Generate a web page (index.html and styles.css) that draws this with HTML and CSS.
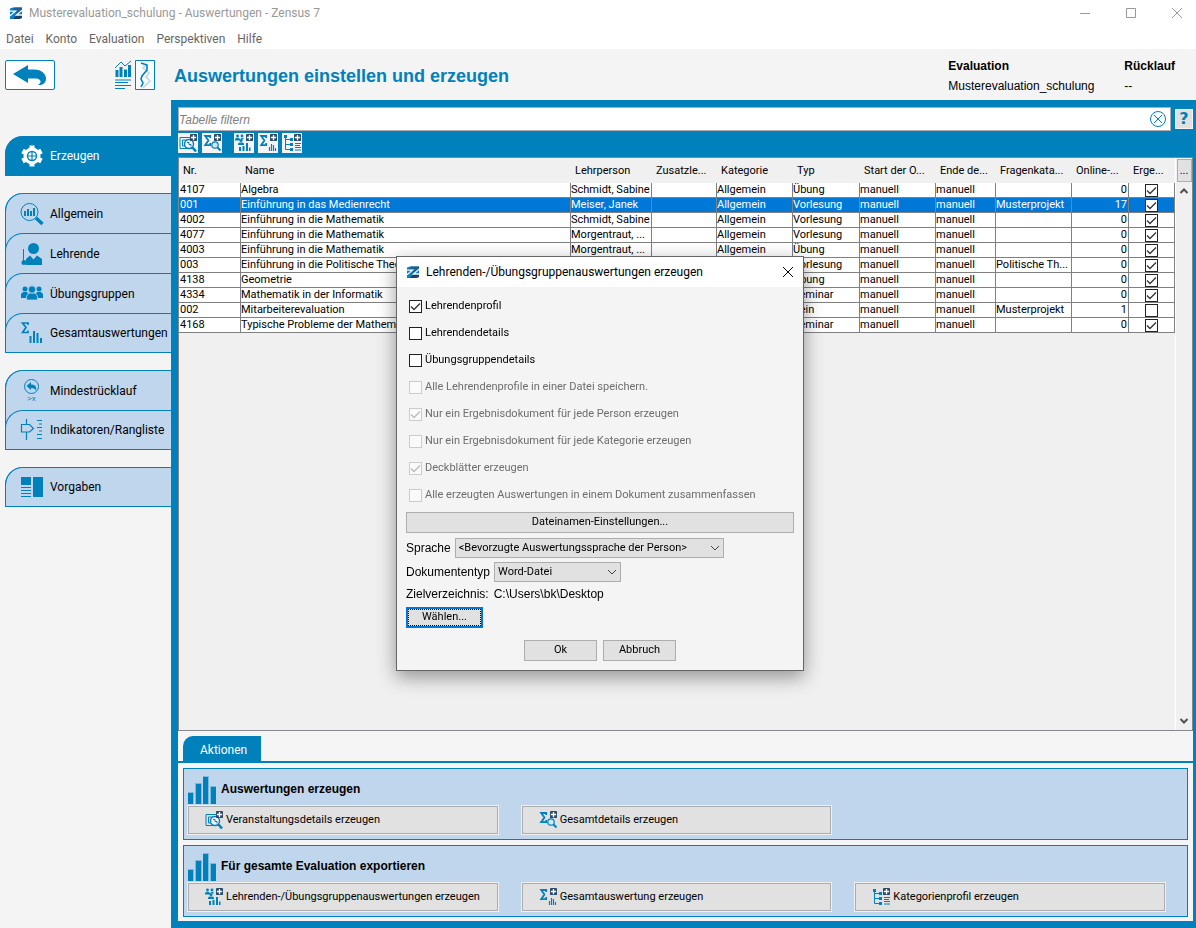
FILE: index.html
```html
<!DOCTYPE html>
<html lang="de">
<head>
<meta charset="utf-8">
<title>Musterevaluation_schulung - Auswertungen - Zensus 7</title>
<link rel="stylesheet" href="styles.css">
</head>
<body>
<svg class="defs" aria-hidden="true">
  <symbol id="logo" viewBox="0 0 14 14">
    <path d="M1 2.500 4 1.500h9V12l-3 1H1z" fill="#0b7fc0"/>
    <path d="M5 1.500h8V4L9 7H6l2-3H4z" fill="#1e5f94"/>
    <path d="M7 9.500 13 8v4l-3 1H4z" fill="#1e3f66"/>
    <path d="M1 5.200h5.500L1 9.800M13 9h-5.500L13 4.200" fill="none" stroke="#f4fafd" stroke-width="1.300"/>
  </symbol>
  <symbol id="plus" viewBox="0 0 8 8">
    <rect width="8" height="8" rx="1" fill="#2c4a6b"/>
    <path d="M4 1v6M1 4h6" stroke="#fff" stroke-width="1.500"/>
  </symbol>
  <symbol id="details" viewBox="0 0 20 20">
    <path d="M2 4.500h12v11H2zM4.500 7h8M4.500 7v6H8" fill="none" stroke="#0081bc"/>
    <circle cx="11" cy="11" r="4.500" fill="#f4f4f4" stroke="#0081bc" stroke-width="1.400"/>
    <path d="M9 9.500h2v2h2v2" fill="none" stroke="#0081bc"/>
    <path d="m14.500 14.500 3.500 4" stroke="#0081bc" stroke-width="2.600"/>
    <use href="#plus" x="12" y="1" width="7" height="7"/>
  </symbol>
  <symbol id="sum" viewBox="0 0 20 20">
    <path d="M8.200 5V3H3.200l3.200 4.500-3.200 4.700h5V10" fill="none" stroke="#0081bc" stroke-width="1.800"/>
  </symbol>
  <symbol id="sumdetails" viewBox="0 0 20 20">
    <use href="#sum"/>
    <circle cx="13" cy="12" r="3.200" fill="#d5e6f3" stroke="#0081bc" stroke-width="1.200"/>
    <path d="m15.500 14.500 3 3" stroke="#0081bc" stroke-width="2"/>
    <use href="#plus" x="12" y="1" width="7" height="7"/>
  </symbol>
  <symbol id="peoplebars" viewBox="0 0 20 20">
    <g fill="#0081bc">
      <circle cx="3.500" cy="3" r="1.400"/><path d="M1 7.500V6l1.500-1.200h2L6 6v1.500z"/>
      <circle cx="8" cy="3" r="1.400"/><path d="M6.500 6 7.500 5h2v1.500h-2z"/>
      <circle cx="7" cy="7.600" r="1.500"/><path d="M4 12v-1.500L5.500 9.500h3l1.500 1V12z"/>
      <path d="M5 14h2v4H5zM8.500 13h2v5h-2zM12 10h2v8h-2zM15 14.500h1.500V18H15z"/>
    </g>
    <use href="#plus" x="12" y="1" width="7" height="7"/>
  </symbol>
  <symbol id="sumbars" viewBox="0 0 20 20">
    <use href="#sum"/>
    <path d="M11.500 14v4M13.500 11v7M15.500 12v6M17.500 15v3" stroke="#0081bc" stroke-width="1.200"/>
    <use href="#plus" x="12" y="1" width="7" height="7"/>
  </symbol>
  <symbol id="tree" viewBox="0 0 20 20">
    <path d="M3.500 3v13.500H9M3.500 6.500H9M3.500 11.500H9" fill="none" stroke="#0081bc"/>
    <path d="M2 2h3v3H2zM8 5h3v3H8zM8 10h3v3H8zM8 15h3v3H8z" fill="#0081bc"/>
    <path d="M13 10.500h6M13 12.500h5M13 14.500h6M13 17h6" stroke="#0081bc"/>
    <use href="#plus" x="12" y="1" width="7" height="7"/>
  </symbol>
  <symbol id="bars" viewBox="0 0 28 28">
    <path d="M0 16h6v12H0zM7 7h7v21H7zM15 0h6v28h-6zM22 10h6v18h-6z" fill="#7fb9dc"/>
    <path d="M0 17h5v11H0zM8 8h5v20H8zM15 1h5v27h-5zM23 11h5v17h-5z" fill="#0081bc"/>
  </symbol>
</svg>

<header class="titlebar">
  <svg class="logo"><use href="#logo"/></svg>
  <span class="window-title">Musterevaluation_schulung - Auswertungen - Zensus 7</span>
  <div class="window-controls">
    <button type="button" aria-label="Minimieren"><svg viewBox="0 0 12 12"><path d="M1 6.500h10"/></svg></button>
    <button type="button" aria-label="Maximieren"><svg viewBox="0 0 12 12"><path d="M1.500 1.500h9v9h-9z"/></svg></button>
    <button type="button" aria-label="Schließen"><svg viewBox="0 0 12 12"><path d="m1 1 10 10M11 1 1 11"/></svg></button>
  </div>
</header>
<nav class="menubar">
  <a href="#">Datei</a><a href="#">Konto</a><a href="#">Evaluation</a><a href="#">Perspektiven</a><a href="#">Hilfe</a>
</nav>

<section class="page-head">
  <button type="button" class="back" aria-label="Zurück">
    <svg viewBox="0 0 36 24"><path d="M1 11 16 2v4.500h6c8 0 12 5 12 9 0 3-1.500 5.500-5 6.500h-3c2-1 3-3 2.500-4-.8-2.200-3-2.500-6.500-2.500h-6V20z" fill="#0081bc"/></svg>
  </button>
  <svg class="head-icon" viewBox="0 0 42 30">
    <g fill="none" stroke="#0081bc">
      <path d="m1 8 6-6 4 4 6-5" />
      <path d="M3 10v7M7 7v10M11.500 9.500V17M15.500 5v12" stroke-width="3"/>
      <path d="M1 20h16M1 22.500h13M1 25.500h16M1 28.500h10" stroke-width="1.200"/>
      <path d="M21.500.5h19v29h-19z" fill="#f8fbfd"/>
      <path d="m33 4-4 4 6 5-3 4 4 4-7 7" stroke="#c0d6ed" stroke-width="1.600"/>
      <path d="m27 3 6 2v5l-5 6-1 3 2 4-2 4" stroke-width="1.600"/>
    </g>
  </svg>
  <h1>Auswertungen einstellen und erzeugen</h1>
  <dl class="facts">
    <div><dt>Evaluation</dt><dd>Musterevaluation_schulung</dd></div>
    <div><dt>Rücklauf</dt><dd>--</dd></div>
  </dl>
</section>

<div class="workspace">
  <nav class="sidebar">
    <div class="tabs">
      <a class="tab active" href="#">
        <svg viewBox="0 0 24 24"><circle cx="12" cy="12" r="8.500" fill="#fff"/><path d="M12 1.500v21M2.500 7l19 10M2.500 17l19-10" stroke="#fff" stroke-width="5"/><circle cx="12" cy="12" r="4.500" fill="#fff" stroke="#0081bc" stroke-width="1.400"/><path d="M12 8v8M8 12h8" stroke="#0081bc" stroke-width="1.200"/></svg>
        Erzeugen</a>
    </div>
    <div class="tabs">
      <a class="tab" href="#">
        <svg viewBox="0 0 24 24"><g fill="none" stroke="#0081bc"><circle cx="9.500" cy="10" r="8.500"/><path d="M5 9v5M8 7v7M11 9v5M14 6v8" stroke-width="2"/><path d="m16 16 6.500 6" stroke-width="3.500"/></g></svg>
        Allgemein</a>
      <a class="tab" href="#">
        <svg viewBox="0 0 24 24"><g fill="#0081bc"><circle cx="13.500" cy="6.500" r="5.500"/><path d="M6 23v-6l4-3.500 3.500 4 3.500-4 5 3.500v6z"/><circle cx="4" cy="20.500" r="2.500"/><path d="M3 7h1v12H3z"/></g></svg>
        Lehrende</a>
      <a class="tab" href="#">
        <svg viewBox="0 0 24 24"><g fill="#0081bc"><circle cx="5" cy="7" r="2.500"/><circle cx="19" cy="7" r="2.500"/><path d="M1 16v-4l2-2h4l1 1.500L7 14v2zM23 16v-4l-2-2h-4l-1 1.500 1 2.500v2z"/></g><g fill="#0081bc" stroke="#c0d6ed" stroke-width=".8"><path d="M6.500 18v-4l2.500-3h6l2.500 3v4z"/><circle cx="12" cy="7.500" r="3.700"/></g></svg>
        Übungsgruppen</a>
      <a class="tab" href="#">
        <svg viewBox="0 0 24 24"><path d="M8 4V2H2.500L6 6.500 2.500 11.500H8V9.500" fill="none" stroke="#0081bc" stroke-width="1.700"/><path d="M10.500 15v7M14 10v12M17.500 12v10M21 17v5" stroke="#0081bc" stroke-width="2"/></svg>
        Gesamtauswertungen</a>
    </div>
    <div class="tabs">
      <a class="tab" href="#">
        <svg viewBox="0 0 24 24"><circle cx="11.500" cy="7.500" r="7" fill="none" stroke="#0081bc"/><path d="m6.500 7 4.500-4v2.500c4 0 6 2 5 6.500-.5-2-2-3-5-3V11z" fill="#0081bc"/><text x="7" y="22" class="tiny">&gt;x</text></svg>
        Mindestrücklauf</a>
      <a class="tab" href="#">
        <svg viewBox="0 0 24 24"><path d="M6.500 1v6M6.500 14v8M1.500 6.500h8l4 4-4 3.500h-8zM17 2.500h5M19 6h3M17 9.500h5M19 13h3M17 16.500h5M17 20.500h5" fill="none" stroke="#0081bc" stroke-width="1.200"/></svg>
        Indikatoren/Rangliste</a>
    </div>
    <div class="tabs">
      <a class="tab" href="#">
        <svg viewBox="0 0 24 24"><path d="M1 2h10v8H1zM13 2h10v20H13z" fill="#0081bc"/><path d="M1 12.500h10M1 15.500h10M1 18.500h10M1 21.500h10" stroke="#0081bc"/></svg>
        Vorgaben</a>
    </div>
  </nav>

  <main class="content">
    <div class="filter-row">
      <div class="filter">
        <input type="text" aria-label="Tabelle filtern" placeholder="Tabelle filtern">
        <button type="button" aria-label="Filter löschen"><svg viewBox="0 0 18 18"><circle cx="9" cy="9" r="7.500"/><path d="m5 5 8 8M13 5l-8 8"/></svg></button>
      </div>
      <button type="button" class="help">?</button>
    </div>
    <div class="toolbar">
      <button type="button" aria-label="Veranstaltungsdetails"><svg><use href="#details"/></svg></button>
      <button type="button" aria-label="Gesamtdetails"><svg><use href="#sumdetails"/></svg></button>
      <span class="spacer"></span>
      <button type="button" aria-label="Lehrendenauswertungen"><svg><use href="#peoplebars"/></svg></button>
      <button type="button" aria-label="Gesamtauswertung"><svg><use href="#sumbars"/></svg></button>
      <button type="button" aria-label="Kategorienprofil"><svg><use href="#tree"/></svg></button>
    </div>

    <div class="grid-pane">
      <div class="grid-body">
        <table>
          <colgroup><col class="w62"><col><col class="w81"><col class="w65"><col class="w76"><col class="w67"><col class="w76"><col class="w60"><col class="w76"><col class="w57"><col class="w46"></colgroup>
          <thead><tr><th>Nr.</th><th>Name</th><th>Lehrperson</th><th>Zusatzle...</th><th>Kategorie</th><th>Typ</th><th>Start der O...</th><th>Ende de...</th><th>Fragenkata...</th><th>Online-...</th><th>Erge...</th></tr></thead>
          <tbody>
            <tr><td>4107</td><td>Algebra</td><td>Schmidt, Sabine</td><td></td><td>Allgemein</td><td>Übung</td><td>manuell</td><td>manuell</td><td></td><td>0</td><td><input type="checkbox" aria-label="Ergebnis 4107" checked></td></tr>
            <tr class="selected"><td>001</td><td>Einführung in das Medienrecht</td><td>Meiser, Janek</td><td></td><td>Allgemein</td><td>Vorlesung</td><td>manuell</td><td>manuell</td><td>Musterprojekt</td><td>17</td><td><input type="checkbox" aria-label="Ergebnis 001" checked></td></tr>
            <tr><td>4002</td><td>Einführung in die Mathematik</td><td>Schmidt, Sabine</td><td></td><td>Allgemein</td><td>Vorlesung</td><td>manuell</td><td>manuell</td><td></td><td>0</td><td><input type="checkbox" aria-label="Ergebnis 4002" checked></td></tr>
            <tr><td>4077</td><td>Einführung in die Mathematik</td><td>Morgentraut, ...</td><td></td><td>Allgemein</td><td>Vorlesung</td><td>manuell</td><td>manuell</td><td></td><td>0</td><td><input type="checkbox" aria-label="Ergebnis 4077" checked></td></tr>
            <tr><td>4003</td><td>Einführung in die Mathematik</td><td>Morgentraut, ...</td><td></td><td>Allgemein</td><td>Übung</td><td>manuell</td><td>manuell</td><td></td><td>0</td><td><input type="checkbox" aria-label="Ergebnis 4003" checked></td></tr>
            <tr><td>003</td><td>Einführung in die Politische Theorie</td><td></td><td></td><td></td><td>Vorlesung</td><td>manuell</td><td>manuell</td><td>Politische Th...</td><td>0</td><td><input type="checkbox" aria-label="Ergebnis 003" checked></td></tr>
            <tr><td>4138</td><td>Geometrie</td><td></td><td></td><td></td><td>Übung</td><td>manuell</td><td>manuell</td><td></td><td>0</td><td><input type="checkbox" aria-label="Ergebnis 4138" checked></td></tr>
            <tr><td>4334</td><td>Mathematik in der Informatik</td><td></td><td></td><td></td><td>Seminar</td><td>manuell</td><td>manuell</td><td></td><td>0</td><td><input type="checkbox" aria-label="Ergebnis 4334" checked></td></tr>
            <tr><td>002</td><td>Mitarbeiterevaluation</td><td></td><td></td><td></td><td>Kein</td><td>manuell</td><td>manuell</td><td>Musterprojekt</td><td>1</td><td><input type="checkbox" aria-label="Ergebnis 002"></td></tr>
            <tr><td>4168</td><td>Typische Probleme der Mathematik</td><td></td><td></td><td></td><td>Seminar</td><td>manuell</td><td>manuell</td><td></td><td>0</td><td><input type="checkbox" aria-label="Ergebnis 4168" checked></td></tr>
          </tbody>
        </table>
      </div>
      <div class="scroll">
        <button type="button" class="columns">...</button>
        <button type="button" class="arrow" aria-label="Nach oben"><svg viewBox="0 0 10 10"><path d="m1.500 7 3.500-3.500L8.500 7"/></svg></button>
        <span class="track"></span>
        <button type="button" class="arrow" aria-label="Nach unten"><svg viewBox="0 0 10 10"><path d="M1.500 3 5 6.500 8.500 3"/></svg></button>
      </div>
    </div>

    <section class="actions">
      <div class="action-tabs"><a href="#">Aktionen</a></div>
      <div class="action-list">
        <div class="group">
          <h2><svg><use href="#bars"/></svg>Auswertungen erzeugen</h2>
          <div class="group-buttons">
            <button type="button"><svg><use href="#details"/></svg>Veranstaltungsdetails erzeugen</button>
            <button type="button"><svg><use href="#sumdetails"/></svg>Gesamtdetails erzeugen</button>
          </div>
        </div>
        <div class="group">
          <h2><svg><use href="#bars"/></svg>Für gesamte Evaluation exportieren</h2>
          <div class="group-buttons">
            <button type="button"><svg><use href="#peoplebars"/></svg>Lehrenden-/Übungsgruppenauswertungen erzeugen</button>
            <button type="button"><svg><use href="#sumbars"/></svg>Gesamtauswertung erzeugen</button>
            <button type="button"><svg><use href="#tree"/></svg>Kategorienprofil erzeugen</button>
          </div>
        </div>
      </div>
    </section>
  </main>
</div>

<div class="overlay">
  <form class="dialog" role="dialog" aria-labelledby="dialog-title">
    <header class="dialog-head">
      <svg class="logo"><use href="#logo"/></svg>
      <span id="dialog-title">Lehrenden-/Übungsgruppenauswertungen erzeugen</span>
      <button type="button" aria-label="Schließen"><svg viewBox="0 0 12 12"><path d="m1 1 10 10M11 1 1 11"/></svg></button>
    </header>
    <div class="dialog-body">
      <div class="checks">
        <label><input type="checkbox" checked>Lehrendenprofil</label>
        <label><input type="checkbox">Lehrendendetails</label>
        <label><input type="checkbox">Übungsgruppendetails</label>
        <label class="off"><input type="checkbox" disabled>Alle Lehrendenprofile in einer Datei speichern.</label>
        <label class="off"><input type="checkbox" disabled checked>Nur ein Ergebnisdokument für jede Person erzeugen</label>
        <label class="off"><input type="checkbox" disabled>Nur ein Ergebnisdokument für jede Kategorie erzeugen</label>
        <label class="off"><input type="checkbox" disabled checked>Deckblätter erzeugen</label>
        <label class="off"><input type="checkbox" disabled>Alle erzeugten Auswertungen in einem Dokument zusammenfassen</label>
      </div>
      <button type="button" class="btn wide">Dateinamen-Einstellungen...</button>
      <div class="field"><label for="lang">Sprache</label><select id="lang" class="long"><option>&lt;Bevorzugte Auswertungssprache der Person&gt;</option></select></div>
      <div class="field"><label for="doc">Dokumententyp</label><select id="doc" class="short"><option>Word-Datei</option></select></div>
      <div class="target"><span>Zielverzeichnis:</span><span>C:\Users\bk\Desktop</span></div>
      <button type="button" class="btn choose">Wählen...</button>
      <div class="dialog-actions"><button type="button" class="btn">Ok</button><button type="button" class="btn">Abbruch</button></div>
    </div>
  </form>
</div>
</body>
</html>
```

FILE: styles.css
```css
:root {
  --blue: #0081bc;
  --light: #c0d6ed;
  --panel: #f4f4f4;
  --ui: Roboto, "Open Sans", sans-serif;
  --arial: "Liberation Sans", Arial, sans-serif;
}
* { box-sizing: border-box; }
body {
  margin: 0;
  min-height: 100vh;
  display: flex;
  flex-direction: column;
  background: var(--panel);
  color: #000;
  font: 11px/14px var(--ui);
}
button, input, select { font: inherit; color: inherit; margin: 0; }
button { padding: 0; border: 0; background: none; }
a { color: inherit; text-decoration: none; }
svg { display: block; flex: none; }
.defs { position: absolute; width: 0; height: 0; }
.logo { width: 14px; height: 14px; }

.titlebar {
  display: flex;
  align-items: center;
  gap: 6px;
  height: 26px;
  padding: 0 4px 0 9px;
  background: #fff;
  color: #999;
  font-size: 12px;
}
.window-controls { display: flex; gap: 16px; margin-left: auto; }
.window-controls button { width: 30px; height: 24px; display: grid; place-items: center; }
.window-controls svg, .dialog-head button svg { width: 12px; height: 12px; fill: none; stroke: #999; }
.menubar {
  display: flex;
  align-items: center;
  gap: 12px;
  height: 23px;
  padding: 2px 6px 0;
  background: #fff;
  color: #666;
  font-size: 12px;
}

.page-head { display: flex; align-items: center; height: 51px; padding: 0 21px 0 5px; }
.back {
  width: 50px;
  height: 30px;
  display: grid;
  place-items: center;
  border: 1px solid var(--blue);
  border-radius: 2px;
  background: #fff;
}
.back svg { width: 36px; height: 24px; }
.head-icon { width: 42px; height: 30px; margin-left: 59px; }
.page-head h1 { margin: 2px 0 0 18px; color: var(--blue); font: bold 18px/22px var(--arial); }
.facts { display: flex; gap: 25px; margin: 2px 0 0 auto; font: 12px/20px var(--arial); }
.facts div:first-child { min-width: 151px; }
.facts dt { font-weight: bold; }
.facts dd { margin: 0; }

.workspace { flex: 1; display: flex; }
.sidebar {
  width: 171px;
  flex: none;
  display: flex;
  flex-direction: column;
  gap: 17px;
  padding: 36px 0 0 5px;
  font-size: 12px;
}
.tabs {
  border: 1px solid var(--blue);
  border-top: 0;
  border-right: 0;
  border-radius: 18px 0 0 0;
  background: var(--light);
}
.tab {
  display: flex;
  align-items: center;
  gap: 6px;
  height: 40px;
  margin-left: -1px;
  padding-left: 14px;
  border: solid var(--blue);
  border-width: 1px 0 0 1px;
  border-radius: 18px 0 0 0;
  white-space: nowrap;
}
.tab:last-child { height: 39px; }
.tab svg { width: 24px; height: 24px; }
.tab.active { background: var(--blue); color: #fff; }
.tiny { font: 8px var(--arial); fill: var(--blue); }

.content {
  flex: 1;
  min-width: 0;
  display: flex;
  flex-direction: column;
  padding: 7px 3px 7px 7px;
  background: var(--blue);
}
.filter-row { display: flex; align-items: center; gap: 4px; }
.filter {
  flex: 1;
  display: flex;
  align-items: center;
  height: 24px;
  padding-right: 3px;
  border: 1px solid #abadb3;
  background: #fff;
}
.filter input { flex: 1; height: 20px; padding: 1px 0 0; border: 0; outline: 0; background: none; font: italic 12px/16px var(--arial); }
.filter input::placeholder { color: #808080; opacity: 1; }
.filter svg { width: 18px; height: 18px; fill: none; stroke: var(--blue); }
.help {
  width: 18px;
  height: 20px;
  border: 1px solid #f4f4f4;
  background: #e1e1e1;
  color: var(--blue);
  font: bold 16px/18px "DejaVu Sans", sans-serif;
}
.toolbar { display: flex; gap: 4px; padding: 2px 0 4px; }
.toolbar .spacer { width: 4px; }
.toolbar button { background: var(--panel); }
.toolbar svg { width: 20px; height: 20px; }

.grid-pane {
  flex: 1;
  display: flex;
  border: 1px solid #828790;
  background: #f0f0f0;
}
.grid-body { flex: 1; min-width: 0; }
table { width: 100%; table-layout: fixed; border-collapse: separate; border-spacing: 0; }
.w46 { width: 46px; } .w57 { width: 57px; } .w60 { width: 60px; } .w62 { width: 62px; }
.w65 { width: 65px; } .w67 { width: 67px; } .w76 { width: 76px; } .w81 { width: 81px; }
th { height: 25px; padding: 0 0 0 4px; font-weight: normal; text-align: left; white-space: nowrap; }
td {
  height: 15px;
  padding: 0;
  overflow: hidden;
  border: solid #808080;
  border-width: 0 1px 1px 0;
  background: #fff;
  line-height: 14px;
  white-space: nowrap;
}
td:first-child { padding-left: 1px; }
td:nth-child(10) { padding-right: 1px; text-align: right; }
.selected td { background: #0078d7; color: #fff; }
input[type="checkbox"] {
  appearance: none;
  display: block;
  width: 13px;
  height: 13px;
  border: 1px solid #222;
  background: #fff;
}
input[type="checkbox"]:checked {
  background: #fff url("data:image/svg+xml,%3Csvg xmlns='http://www.w3.org/2000/svg' viewBox='0 0 11 11'%3E%3Cpath d='M1 5.500 4 8.500 10 2.500' fill='none' stroke='%23333' stroke-width='1.300'/%3E%3C/svg%3E");
}
input[type="checkbox"]:disabled { border-color: #ccc; background-color: #fafafa; }
input[type="checkbox"]:disabled:checked {
  background-image: url("data:image/svg+xml,%3Csvg xmlns='http://www.w3.org/2000/svg' viewBox='0 0 11 11'%3E%3Cpath d='M1 5.500 4 8.500 10 2.500' fill='none' stroke='%23bbb' stroke-width='1.300'/%3E%3C/svg%3E");
}
td input[type="checkbox"] { margin: 0 auto; }

.scroll { width: 17px; display: flex; flex-direction: column; align-items: center; border-left: 1px solid #fff; }
.columns { width: 15px; height: 23px; margin-top: 1px; border: 1px solid #adadad; background: #e1e1e1; }
.arrow { width: 16px; height: 18px; display: grid; place-items: center; }
.arrow svg { width: 10px; height: 10px; fill: none; stroke: #505050; stroke-width: 2; }
.track { flex: 1; }

.actions { background: #f5f5f5; }
.action-tabs { display: flex; padding: 5px 0 0 5px; border-bottom: 2px solid var(--blue); }
.action-tabs a {
  padding: 7px 14px 4px 17px;
  border-radius: 10px 0 0 0;
  background: var(--blue);
  color: #fff;
  font-size: 12px;
}
.action-list { display: flex; flex-direction: column; gap: 5px; padding: 5px 5px 4px; }
.group { padding: 5px 21px 4px 3px; border: 1px solid var(--blue); background: var(--light); }
.group h2 { display: flex; align-items: center; gap: 5px; margin: 0 0 0 1px; font: bold 12px/31px var(--arial); }
.group h2 svg { width: 28px; height: 28px; }
.group-buttons { display: grid; grid-template-columns: repeat(3, minmax(0, 1fr)); gap: 22px; }
.group-buttons button {
  display: flex;
  align-items: center;
  gap: 2px;
  height: 28px;
  margin: 1px;
  padding: 0 15px;
  border: 1px solid #adadad;
  outline: 1px solid #f0f0f0;
  background: #e1e1e1;
  white-space: nowrap;
}
.group-buttons svg { width: 20px; height: 20px; }

.overlay { position: fixed; inset: 0; display: grid; place-items: center; padding: 0 0 2px 4px; }
.dialog {
  width: 408px;
  border: 1px solid #666;
  background: var(--panel);
  box-shadow: 0 6px 18px rgba(0, 0, 0, .4);
}
.dialog-head { display: flex; align-items: center; gap: 6px; height: 30px; padding: 0 9px; background: #fff; font-size: 12px; }
.dialog-head button { margin-left: auto; }
.dialog-head button svg { stroke: #000; }
.dialog-body { display: flex; flex-direction: column; align-items: flex-start; padding: 6px 9px 9px; }
.checks { padding-left: 3px; }
.checks label { display: flex; align-items: center; gap: 3px; height: 27px; white-space: nowrap; }
.checks .off { color: #6d6d6d; }
.btn { min-width: 73px; height: 21px; border: 1px solid #adadad; background: #e1e1e1; line-height: 18px; }
.btn.wide { width: 100%; margin: 3px 0 5px; }
.field { display: flex; align-items: center; gap: 4px; margin-bottom: 4px; font: 12px/20px var(--arial); }
select {
  appearance: none;
  height: 20px;
  padding: 0 3px;
  border: 1px solid #adadad;
  border-radius: 0;
  background: #e1e1e1 url("data:image/svg+xml,%3Csvg xmlns='http://www.w3.org/2000/svg' viewBox='0 0 10 10'%3E%3Cpath d='M1 3l4 4 4-4' fill='none' stroke='%23444'/%3E%3C/svg%3E") no-repeat right 3px center / 10px 10px;
  font: 11px/18px var(--ui);
}
.long { width: 269px; }
.short { width: 127px; }
.target { display: flex; gap: 5px; margin-bottom: 4px; font: 12px/17px var(--arial); }
.choose { width: 77px; border: 2px solid #0078d7; outline: 1px dotted #000; outline-offset: -3px; line-height: 16px; }
.dialog-actions { display: flex; align-self: center; gap: 6px; margin-top: 12px; }
```
